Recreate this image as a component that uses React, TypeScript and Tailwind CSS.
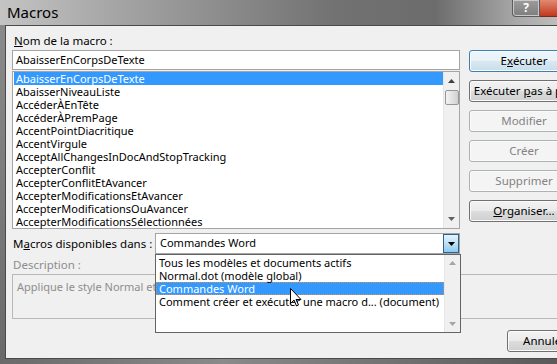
import React from "react";

const macros = [
  "AbaisserEnCorpsDeTexte",
  "AbaisserNiveauListe",
  "AccéderÀEnTête",
  "AccéderÀPremPage",
  "AccentPointDiacritique",
  "AccentVirgule",
  "AcceptAllChangesInDocAndStopTracking",
  "AccepterConflit",
  "AccepterConflitEtAvancer",
  "AccepterModificationsEtAvancer",
  "AccepterModificationsOuAvancer",
  "AccepterModificationsSélectionnées",
];

const sources = [
  "Tous les modèles et documents actifs",
  "Normal.dot (modèle global)",
  "Commandes Word",
  "Comment créer et exécuter une macro d... (document)",
];

const font = { fontFamily: '"Noto Sans", "Open Sans", sans-serif' };

const Button = ({
  children,
  disabled,
  primary,
  small,
}: {
  children: React.ReactNode;
  disabled?: boolean;
  primary?: boolean;
  small?: boolean;
}) => {
  let cls =
    "h-[22px] shrink-0 rounded-[3px] border flex items-center justify-center text-[11.5px] leading-none whitespace-nowrap shadow-[inset_0_0_0_1px_#fbfbfb] ";
  cls += small ? "w-[75px] " : "w-[110px] ";
  if (disabled) cls += "border-[#adb2b5] bg-[#f4f4f4] text-[#838383]";
  else if (primary)
    cls +=
      "border-[#3c7fb1] text-black bg-[linear-gradient(#eaf6fd_0%,#e8f1f7_50%,#d9e9f2_50%,#c8dde9_100%)] shadow-[inset_0_0_0_1px_#8ee0fb]";
  else
    cls +=
      "border-[#707070] text-black bg-[linear-gradient(#f2f2f2_0%,#ebebeb_50%,#dddddd_50%,#cfcfcf_100%)]";
  return <div className={cls}>{children}</div>;
};

const Arrow = ({ up, color }: { up?: boolean; color: string }) => (
  <svg width="7" height="4" viewBox="0 0 7 4">
    <path d={up ? "M0 4 L3.5 0 L7 4 Z" : "M0 0 L3.5 4 L7 0 Z"} fill={color} />
  </svg>
);

const App = () => {
  return (
    <div
      className="relative w-[557px] h-[364px] overflow-hidden flex flex-col bg-[#7b7b7b] text-black"
      style={font}
    >
      {/* Title bar */}
      <div className="relative h-[25px] shrink-0 flex items-center pl-[7px] bg-[linear-gradient(to_right,#c4c4c4_0%,#a6a6a6_20%,#8c8c8c_40%,#727272_60%,#6c6c6c_78%,#a9a9a9_93%,#bdbdbd_100%)]">
        <span className="text-[15px] text-black">Macros</span>
        <div className="absolute right-0 top-0 flex">
          <div className="w-[28px] h-[17px] rounded-bl-[4px] border border-t-0 border-[#5c5c5c] bg-[linear-gradient(#9d9d9d,#7d7d7d)] flex items-center justify-center shadow-[inset_0_0_0_1px_#c8c8c8]">
            <span className="text-[12px] font-bold text-white leading-none">?</span>
          </div>
          <div className="w-[17px] h-[17px] border-b border-[#7a2a1a] bg-[linear-gradient(#e08a70,#c2391c)]" />
        </div>
      </div>

      <div className="flex flex-1 min-h-0">
        <div className="w-[5px] shrink-0 bg-[linear-gradient(#8a8a8a,#6a6a6a)]" />
        {/* Client area */}
        <div className="relative flex-1 border-l border-t border-b border-[#4a4a4a] bg-[#f0f0f0] flex flex-col text-[11px]">
          <div className="flex">
            <div className="ml-[6px] w-[448px] shrink-0 flex flex-col pt-[7px]">
              <div className="h-[16px] pl-[2px] leading-[16px] text-[11.5px]">
                <span className="underline">N</span>om de la macro :
              </div>
              <div className="mt-[1px] h-[20px] border border-[#a5a5a5] bg-white pl-[3px] leading-[18px]">
                AbaisserEnCorpsDeTexte
              </div>
              <div className="mt-[1px] h-[158px] border border-[#a5a5a5] bg-white flex">
                <div className="flex-1 pl-[1px]">
                  {macros.map((m, i) => (
                    <div
                      key={m}
                      className={
                        "h-[13px] leading-[13px] pl-[2px] whitespace-nowrap " +
                        (i === 0 ? "bg-[#3399ff] text-white" : "")
                      }
                    >
                      {m}
                    </div>
                  ))}
                </div>
                <div className="w-[16px] shrink-0 bg-[#f0f0f0] border-l border-[#e6e6e6] flex flex-col items-center">
                  <div className="h-[18px] flex items-center justify-center">
                    <Arrow up color="#404040" />
                  </div>
                  <div className="w-[14px] h-[15px] rounded-[2px] border border-[#969696] bg-[linear-gradient(to_right,#f3f3f3,#e2e2e2,#d0d0d0)]" />
                  <div className="flex-1" />
                  <div className="h-[18px] flex items-center justify-center">
                    <Arrow color="#606060" />
                  </div>
                </div>
              </div>
            </div>
            <div className="ml-[9px] pt-[24px] flex flex-col gap-[8px]">
              <Button primary>
                <span>
                  E<span className="underline">x</span>écuter
                </span>
              </Button>
              <Button>
                <span>
                  Exécuter <span className="underline">p</span>as à pas
                </span>
              </Button>
              <Button disabled>Modifier</Button>
              <Button disabled>Créer</Button>
              <Button disabled>Supprimer</Button>
              <Button>
                <span>
                  <span className="underline">O</span>rganiser...
                </span>
              </Button>
            </div>
          </div>

          {/* Macros disponibles dans */}
          <div className="mt-[4px] flex items-center h-[21px]">
            <div className="ml-[7px] w-[142px] whitespace-nowrap text-[11.5px]">
              M<span className="underline">a</span>cros disponibles dans :
            </div>
            <div className="w-[305px] h-[21px] border border-[#a5a5a5] bg-white flex items-center">
              <span className="flex-1 pl-[4px]">Commandes Word</span>
              <div className="w-[16px] h-[19px] border border-[#2c628b] bg-[linear-gradient(#e6f3fb,#bfe1f5_50%,#8bcaee_100%)] flex items-center justify-center">
                <Arrow color="#000" />
              </div>
            </div>
          </div>

          <div className="mt-[3px] h-[16px] leading-[16px] ml-[7px] text-[11.5px] text-[#8d8d8d]">
            Description :
          </div>
          <div className="mt-[1px] ml-[6px] w-[560px] h-[45px] border border-[#b8b8b8] bg-[#f0f0f0] pl-[4px] pt-[5px] text-[#8d8d8d] leading-[14px]">
            Applique le style Normal et
          </div>

          <div className="mt-[11px] ml-[501px] flex">
            <Button small>Annuler</Button>
          </div>

          {/* Dropdown popup */}
          <div className="absolute left-[149px] top-[228px] w-[306px] h-[79px] border border-[#646464] bg-white flex">
            <div className="flex-1 pt-[1px]">
              {sources.map((s, i) => (
                <div
                  key={s}
                  className={
                    "h-[13px] leading-[11px] pl-[2px] whitespace-nowrap " +
                    (i === 2
                      ? "bg-[#3399ff] text-white border border-dotted border-[#d89050]"
                      : "border border-transparent")
                  }
                >
                  {s}
                </div>
              ))}
            </div>
            <div className="w-[16px] shrink-0 bg-[#f0f0f0] border-l border-[#e6e6e6] flex flex-col items-center">
              <div className="h-[16px] flex items-center justify-center">
                <Arrow up color="#a5a5a5" />
              </div>
              <div className="flex-1" />
              <div className="h-[16px] flex items-center justify-center">
                <Arrow color="#a5a5a5" />
              </div>
            </div>
          </div>

          {/* Mouse cursor */}
          <svg
            className="absolute left-[284px] top-[262px]"
            width="12"
            height="19"
            viewBox="0 0 12 19"
          >
            <path
              d="M0.5 0.5 L0.5 15.5 L4 12 L6.5 18 L8.5 17 L6 11.5 L11 11.5 Z"
              fill="#fff"
              stroke="#000"
              strokeWidth="1"
            />
          </svg>
        </div>
      </div>
      <div className="h-[5px] shrink-0 bg-[linear-gradient(to_right,#6a6a6a,#8a8a8a_40%,#5a5a5a)]" />
    </div>
  );
};

export default App;
